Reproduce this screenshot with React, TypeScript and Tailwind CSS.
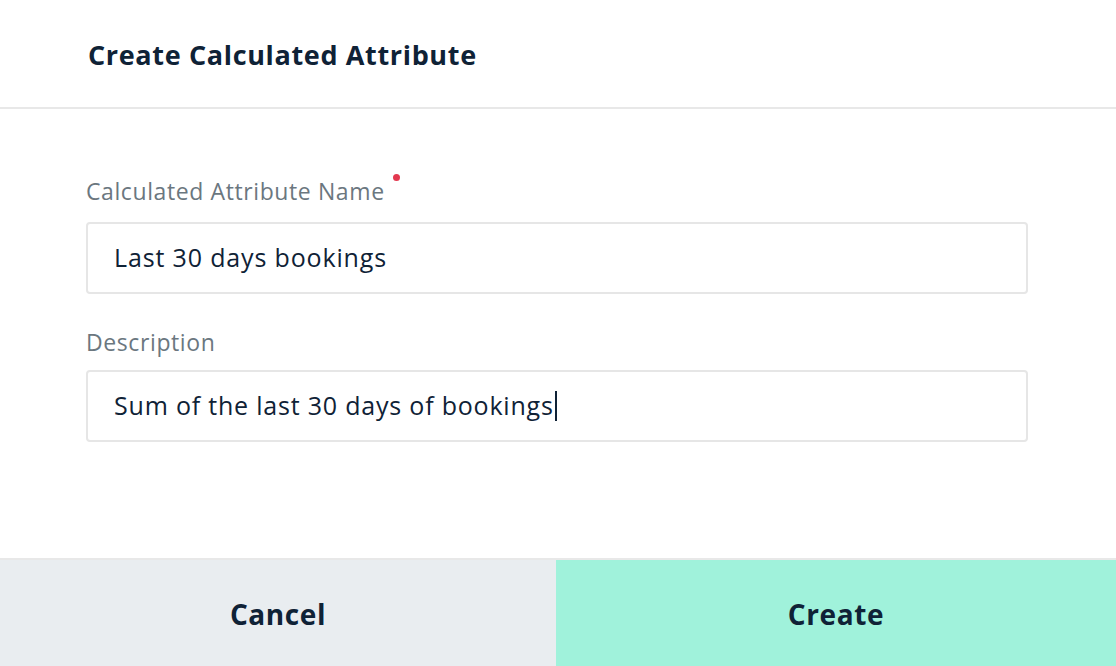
export default function App() {
  return (
    <div className="flex h-[666px] w-[1116px] flex-col bg-white font-['Open_Sans',sans-serif] text-[#0f2236]">
      <div className="flex h-[109px] shrink-0 items-center border-b-2 border-[#e8e8e8] pl-[88px] pt-[3px]">
        <h1 className="text-[27px] font-bold tracking-[0.65px]">Create Calculated Attribute</h1>
      </div>

      <div className="flex flex-1 flex-col px-[86px] pt-[68px]">
        <label className="flex items-start text-[23px] leading-[28px] tracking-[0.6px] text-[#6b777f]">
          Calculated Attribute Name
          <span className="ml-[8px] mt-[-3px] h-[7px] w-[7px] rounded-full bg-[#e3384f]" />
        </label>
        <div className="mt-[17px] flex h-[72px] w-[942px] items-center rounded-[4px] border-2 border-[#e6e6e6] pl-[26px] text-[25px] tracking-[0.85px]">
          Last 30 days bookings
        </div>

        <label className="mt-[34px] text-[23px] leading-[28px] tracking-[0.6px] text-[#6b777f]">Description</label>
        <div className="mt-[14px] flex h-[72px] w-[942px] items-center rounded-[4px] border-2 border-[#e6e6e6] pl-[26px] text-[25px] tracking-[0.8px]">
          Sum of the last 30 days of bookings
          <span className="ml-[1px] h-[30px] w-[2px] bg-[#0f2236]" />
        </div>
      </div>

      <div className="flex h-[108px] shrink-0 border-t-2 border-[#e8e8e8]">
        <button className="w-[556px] bg-[#e9edf0] pt-[2px] text-[28px] font-bold tracking-[0.6px]">Cancel</button>
        <button className="flex-1 bg-[#a0f2db] pt-[2px] text-[28px] font-bold tracking-[0.6px]">Create</button>
      </div>
    </div>
  );
}
